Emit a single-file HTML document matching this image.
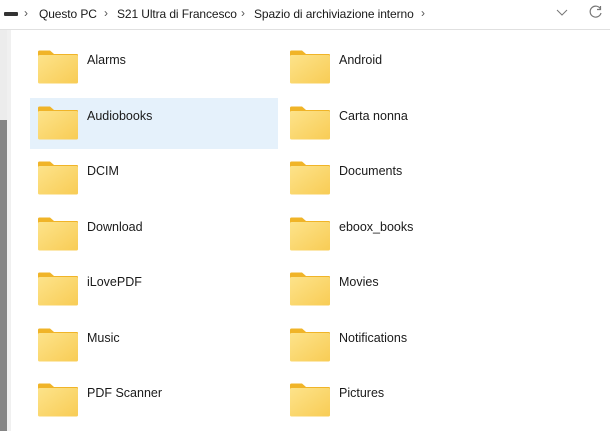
<!DOCTYPE html>
<html><head><style>
body{margin:0;width:610px;height:431px;overflow:hidden;background:#fff;font-family:"Liberation Sans",sans-serif;position:relative}
.hdr{position:absolute;left:0;top:0;width:610px;height:29px;border-bottom:1px solid #e0e0e0;font-size:12px;color:#1a1a1a}
.hdr span{position:absolute;top:7px;white-space:nowrap;letter-spacing:-0.1px}
.chev{color:#555;font-size:12px}
.lp{position:absolute;left:0;top:30px;width:7px;height:401px;background:#ececec}
.lp2{position:absolute;left:0;top:120px;width:7px;height:311px;background:#858585}
.lp3{position:absolute;left:7px;top:30px;width:4px;height:401px;background:#f0f0f0}
.sel{position:absolute;left:30px;top:98px;width:248px;height:51px;background:#e5f1fb}
.it{position:absolute;font-size:12.5px;color:#1a1a1a}
.f{position:absolute;width:42px;height:34px}
</style></head><body>
<div class="hdr">
<div style="position:absolute;left:4px;top:12px;width:14px;height:4px;background:#333;border-radius:1px"></div>
<span class="chev" style="left:24px;top:6px">›</span>
<span style="left:39px">Questo PC</span>
<span class="chev" style="left:104px;top:6px">›</span>
<span style="left:117px">S21 Ultra di Francesco</span>
<span class="chev" style="left:241px;top:6px">›</span>
<span style="left:254px">Spazio di archiviazione interno</span>
<span class="chev" style="left:421px;top:6px">›</span>
<svg style="position:absolute;left:555px;top:7px" width="14" height="10"><path d="M2 3 L7 8 L12 3" fill="none" stroke="#777" stroke-width="1"/></svg>
<svg style="position:absolute;left:588px;top:4px" width="16" height="16"><path d="M12.5 5 A5.5 5.5 0 1 0 13 9" fill="none" stroke="#777" stroke-width="1.2"/><path d="M12.5 2 V5.5 H9" fill="none" stroke="#777" stroke-width="1.2"/></svg>
</div>
<div class="lp"></div><div class="lp2"></div><div class="lp3"></div>
<div class="sel"></div>
<div id="c"></div>
<script>
var L=["Alarms","Audiobooks","DCIM","Download","iLovePDF","Music","PDF Scanner"],R=["Android","Carta nonna","Documents","eboox_books","Movies","Notifications","Pictures"];
var svg='<svg class="f" viewBox="0 0 42 34"><defs><linearGradient id="g" x1="0" y1="0" x2="1" y2="1"><stop offset="0" stop-color="#fde38a"/><stop offset="1" stop-color="#f8cc55"/></linearGradient></defs><path d="M1 2 Q1 0.5 2.5 0.5 H13 L17 4 H40 Q41 4 41 5 V10 H1 Z" fill="#f0b428"/><rect x="1" y="5" width="40" height="28.5" rx="1.5" fill="url(#g)"/></svg>';
var h='';for(var i=0;i<7;i++){var y=50+i*55.5;
h+='<div style="position:absolute;left:37px;top:'+y+'px">'+svg+'</div><div class="it" style="left:87px;top:'+(y+3)+'px">'+L[i]+'</div>';
h+='<div style="position:absolute;left:289px;top:'+y+'px">'+svg+'</div><div class="it" style="left:339px;top:'+(y+3)+'px">'+R[i]+'</div>';}
document.getElementById('c').innerHTML=h;
</script>
</body></html>
